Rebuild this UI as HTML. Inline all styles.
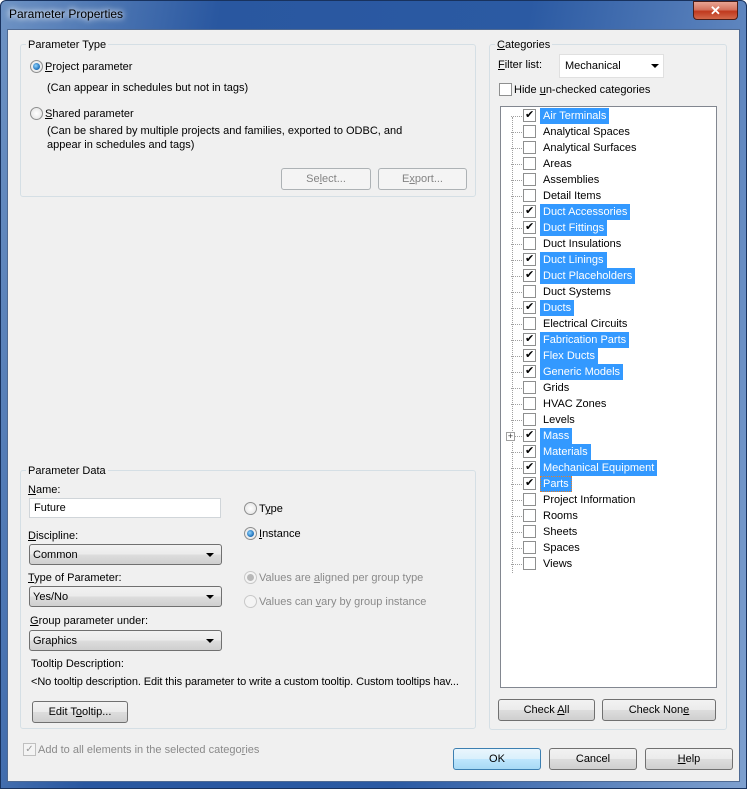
<!DOCTYPE html>
<html><head><meta charset="utf-8"><style>
*{margin:0;padding:0;box-sizing:border-box}
body{width:747px;height:789px;overflow:hidden;background:#fff;font-family:"Liberation Sans",sans-serif;font-size:11px;line-height:17px;color:#000;position:relative}
.a{position:absolute;white-space:nowrap}
.frame{position:absolute;left:0;top:0;width:747px;height:789px;background:linear-gradient(100deg,#6e93c4 0%,#2957a0 25%,#2b5aa3 60%,#7ea0cf 100%);border:1px solid #18325e;border-radius:6px 6px 0 0}
.client{position:absolute;left:7px;top:29px;width:733px;height:753px;background:#f0f0f0;border:1px solid #4f6a93}
.grp{position:absolute;border:1px solid #d5dfe5;border-radius:3px}
.lg{position:absolute;background:#f0f0f0;padding:0 2px;top:-9px;left:5px}
.btn{position:absolute;border:1px solid #707070;border-radius:3px;background:linear-gradient(#f2f2f2 0%,#ebebeb 50%,#dddddd 51%,#cfcfcf 100%);text-align:center;line-height:21px}
.dis{border-color:#adb2b5;background:#f4f4f4;color:#838383}
.radio{position:absolute;width:13px;height:13px;border-radius:50%;border:1px solid #8e8f8f;background:radial-gradient(#fff,#e0e0e0)}
.radio.on::after{content:"";position:absolute;left:2px;top:2px;width:7px;height:7px;border-radius:50%;background:radial-gradient(circle at 40% 40%,#8fd4ff,#1a6bb5 70%,#0d3a78)}
.radio.d{border-color:#c8c8c8;background:#f4f4f4}
.radio.d.on::after{background:#b8b8b8}
.cb{position:absolute;width:13px;height:13px;border:1px solid #8e8f8f;background:#fff}
.cb.on::after{content:"✔";position:absolute;left:1px;top:-2px;font-size:11px;line-height:15px;color:#000}
.combo{position:absolute;height:21px;border:1px solid #707070;border-radius:3px;background:linear-gradient(#f2f2f2 0%,#ebebeb 50%,#dddddd 51%,#cfcfcf 100%);padding-left:3px;line-height:21px}
.combo::after{content:"";position:absolute;right:7px;top:8px;border-left:4px solid transparent;border-right:4px solid transparent;border-top:4px solid #000}
.u{text-decoration:underline}
.row{position:absolute;left:0;height:16px;width:210px}
.row .t{position:absolute;left:39px;top:0;line-height:16px;padding:0 3px;height:16px}
.row .t.s{background:#3399ff;color:#fff}
.row .cb{left:22px;top:1px}
.row .dl{position:absolute;left:10px;top:8px;width:11px;border-top:1px dotted #a0a0a0}
</style></head><body>
<div class="frame"></div>
<div class="a" style="left:9px;top:6px;font-size:12px;color:#000;text-shadow:0 0 8px #fff,0 0 6px #fff">Parameter Properties</div>
<div class="a" style="left:693px;top:1px;width:45px;height:19px;border:1px solid #4a1e18;border-radius:0 0 4px 4px;background:linear-gradient(#e8a493 0%,#d4735e 45%,#c0391e 55%,#d2684a 100%);color:#fff;text-align:center;font-weight:bold;font-size:13px;line-height:17px">✕</div>
<div class="client"></div>

<div class="grp" style="left:20px;top:44px;width:456px;height:153px"><div class="lg" style="top:-8px">Parameter Type</div></div>
<div class="radio on" style="left:30px;top:60px"></div>
<div class="a" style="left:45px;top:59px"><span class="u">P</span>roject parameter</div>
<div class="a" style="left:47px;top:80px">(Can appear in schedules but not in tags)</div>
<div class="radio" style="left:30px;top:107px"></div>
<div class="a" style="left:45px;top:106px"><span class="u">S</span>hared parameter</div>
<div class="a" style="left:47px;top:124px;line-height:14px">(Can be shared by multiple projects and families, exported to ODBC, and<br>appear in schedules and tags)</div>
<div class="btn dis" style="left:281px;top:168px;width:90px;height:22px">Se<span class="u">l</span>ect...</div>
<div class="btn dis" style="left:378px;top:168px;width:89px;height:22px">E<span class="u">x</span>port...</div>

<div class="grp" style="left:20px;top:470px;width:456px;height:259px"><div class="lg" style="top:-8px">Parameter Data</div></div>
<div class="a" style="left:28px;top:482px"><span class="u">N</span>ame:</div>
<div class="a" style="left:29px;top:498px;width:192px;height:20px;background:#fff;border:1px solid #d0d5d9;padding-left:4px;line-height:19px">Future</div>
<div class="a" style="left:28px;top:528px"><span class="u">D</span>iscipline:</div>
<div class="combo" style="left:29px;top:544px;width:193px">Common</div>
<div class="a" style="left:28px;top:570px"><span class="u">T</span>ype of Parameter:</div>
<div class="combo" style="left:29px;top:586px;width:193px">Yes/No</div>
<div class="a" style="left:30px;top:613px"><span class="u">G</span>roup parameter under:</div>
<div class="combo" style="left:29px;top:630px;width:193px">Graphics</div>
<div class="a" style="left:31px;top:656px">Tooltip Description:</div>
<div class="a" style="left:31px;top:674px;letter-spacing:-0.1px">&lt;No tooltip description. Edit this parameter to write a custom tooltip. Custom tooltips hav...</div>
<div class="btn" style="left:32px;top:701px;width:96px;height:22px">Edit T<span class="u">o</span>oltip...</div>
<div class="radio" style="left:244px;top:502px"></div>
<div class="a" style="left:259px;top:501px">T<span class="u">y</span>pe</div>
<div class="radio on" style="left:244px;top:527px"></div>
<div class="a" style="left:259px;top:526px"><span class="u">I</span>nstance</div>
<div class="radio d on" style="left:244px;top:571px"></div>
<div class="a" style="left:259px;top:570px;color:#8a8a8a">Values are <span class="u">a</span>ligned per group type</div>
<div class="radio d" style="left:244px;top:595px"></div>
<div class="a" style="left:259px;top:594px;color:#8a8a8a">Values can <span class="u">v</span>ary by group instance</div>

<div class="a" style="left:23px;top:743px;width:13px;height:13px;border:1px solid #c0c0c0;background:#f4f4f4;color:#999;font-size:10px;line-height:11px;text-align:center">✓</div>
<div class="a" style="left:38px;top:742px;color:#8a8a8a">Add to all elements in the selected catego<span class="u">r</span>ies</div>

<div class="grp" style="left:489px;top:44px;width:238px;height:686px"><div class="lg" style="top:-8px"><span class="u">C</span>ategories</div></div>
<div class="a" style="left:498px;top:57px"><span class="u">F</span>ilter list:</div>
<div class="a" style="left:559px;top:54px;width:105px;height:24px;background:#fff;border:1px solid #e0e0e0;padding-left:5px;line-height:23px">Mechanical</div>
<div class="a" style="left:651px;top:64px;border-left:4px solid transparent;border-right:4px solid transparent;border-top:4px solid #000"></div>
<div class="cb" style="left:499px;top:83px"></div>
<div class="a" style="left:514px;top:82px">Hide <span class="u">u</span>n-checked categories</div>
<div class="a" style="left:500px;top:106px;width:217px;height:582px;background:#fff;border:1px solid #828790;overflow:hidden">
<div class="a" style="left:11px;top:10px;height:456px;border-left:1px dotted #a0a0a0"></div>
<div id="tree"></div>
</div>
<div class="btn" style="left:498px;top:699px;width:97px;height:22px">Check <span class="u">A</span>ll</div>
<div class="btn" style="left:602px;top:699px;width:114px;height:22px">Check Non<span class="u">e</span></div>

<div class="btn" style="left:453px;top:748px;width:88px;height:22px;border-color:#3c7fb1;background:linear-gradient(#eaf6fd 0%,#d9f0fc 50%,#bee6fd 51%,#a7d9f5 100%)">OK</div>
<div class="btn" style="left:549px;top:748px;width:88px;height:22px">Cancel</div>
<div class="btn" style="left:645px;top:748px;width:88px;height:22px"><span class="u">H</span>elp</div>

<script>
var items=[["Air Terminals",1],["Analytical Spaces",0],["Analytical Surfaces",0],["Areas",0],["Assemblies",0],["Detail Items",0],["Duct Accessories",1],["Duct Fittings",1],["Duct Insulations",0],["Duct Linings",1],["Duct Placeholders",1],["Duct Systems",0],["Ducts",1],["Electrical Circuits",0],["Fabrication Parts",1],["Flex Ducts",1],["Generic Models",1],["Grids",0],["HVAC Zones",0],["Levels",0],["Mass",1],["Materials",1],["Mechanical Equipment",1],["Parts",1],["Project Information",0],["Rooms",0],["Sheets",0],["Spaces",0],["Views",0]];
var h="";
items.forEach(function(it,i){
 var y=1+i*16;
 h+='<div class="row" style="top:'+y+'px"><div class="dl"></div><div class="cb'+(it[1]?' on':'')+'"></div><div class="t'+(it[1]?' s':'')+'"'+(it[0]=="Parts"?' style="outline:1px dotted #e08030;outline-offset:-1px"':'')+'>'+it[0]+'</div></div>';
});
h+='<div class="a" style="left:5px;top:325px;width:9px;height:9px;border:1px solid #a0a0a0;background:#fff;font-size:9px;line-height:7px;text-align:center;color:#333">+</div>';
document.getElementById("tree").innerHTML=h;
</script>
</body></html>
